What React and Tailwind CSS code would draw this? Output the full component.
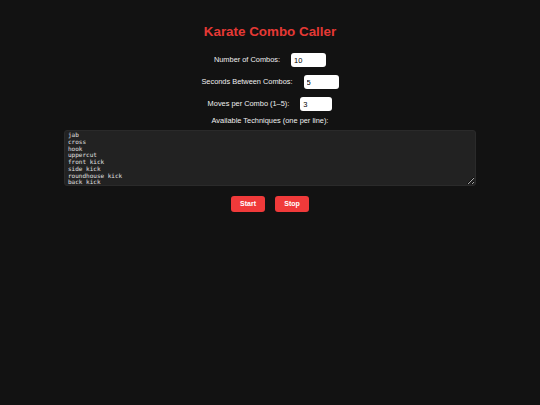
import React, { useState } from 'react';

// Default list of techniques shown in the textarea
const DEFAULT_TECHNIQUES = [
  'jab',
  'cross',
  'hook',
  'uppercut',
  'front kick',
  'side kick',
  'roundhouse kick',
  'back kick',
  'spinning back fist',
  'knee strike',
].join('\n');

function Field({ label, value, onChange, inputWidth }) {
  return (
    <div className="flex items-center gap-[11px] h-[14px]">
      <label className="text-[7.4px] text-[#f0f0f0]">{label}</label>
      <input
        type="number"
        value={value}
        onChange={(e) => onChange(e.target.value)}
        className={`${inputWidth} h-[14px] rounded-[3px] bg-white text-black text-[7.5px] px-[3px] outline-none [appearance:textfield] [&::-webkit-inner-spin-button]:appearance-none`}
      />
    </div>
  );
}

export default function App() {
  const [combos, setCombos] = useState('10');
  const [seconds, setSeconds] = useState('5');
  const [moves, setMoves] = useState('3');
  const [techniques, setTechniques] = useState(DEFAULT_TECHNIQUES);

  return (
    <div className="min-h-[405px] bg-[#121212] flex flex-col items-center font-['Liberation_Sans',Arial,sans-serif]">
      <h1 className="mt-[24px] text-[13.4px] leading-[16px] font-bold text-[#e53935]">
        Karate Combo Caller
      </h1>

      <div className="mt-[13px] flex flex-col items-center gap-[8px]">
        <Field label="Number of Combos:" value={combos} onChange={setCombos} inputWidth="w-[35px]" />
        <Field label="Seconds Between Combos:" value={seconds} onChange={setSeconds} inputWidth="w-[35px]" />
        <Field label="Moves per Combo (1–5):" value={moves} onChange={setMoves} inputWidth="w-[32px]" />
      </div>

      <div className="mt-[5px] text-[7.4px] leading-[10px] text-[#f0f0f0]">Available Techniques (one per line):</div>

      <textarea
        value={techniques}
        spellCheck={false}
        onChange={(e) => setTechniques(e.target.value)}
        className="mt-[4px] w-[412px] h-[56px] rounded-[3px] bg-[#222222] border border-[#2a2a2a] text-[#e0e0e0] font-['DejaVu_Sans_Mono',monospace] text-[6px] leading-[6.75px] px-[3px] pt-[1px] outline-none resize-y overflow-hidden"
      />

      <div className="mt-[10px] flex gap-[10px]">
        <button className="w-[34px] h-[16px] rounded-[3px] bg-[#f03a3a] text-white text-[7px] font-bold">
          Start
        </button>
        <button className="w-[34px] h-[16px] rounded-[3px] bg-[#f03a3a] text-white text-[7px] font-bold">
          Stop
        </button>
      </div>
    </div>
  );
}
